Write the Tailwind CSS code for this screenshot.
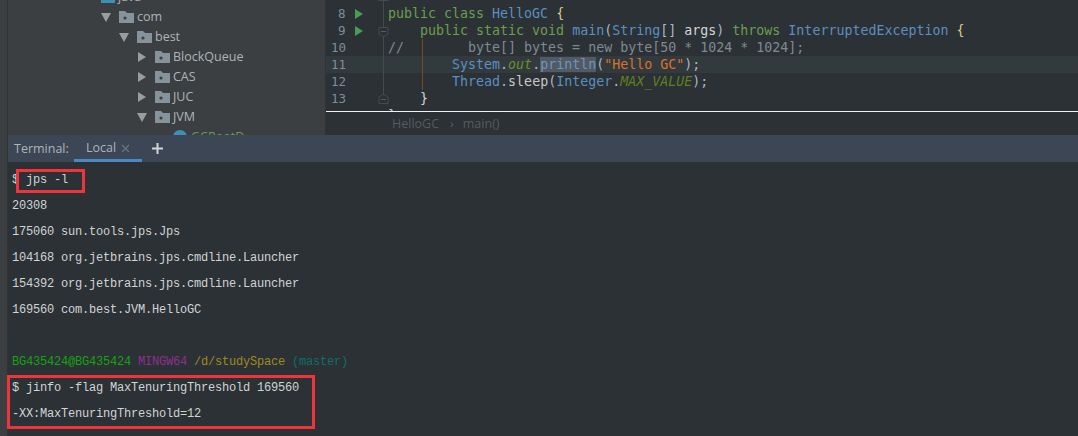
<!DOCTYPE html>
<html lang="en">
<head>
    <meta charset="UTF-8">
    <title>HelloGC - Terminal</title>
    <script src="https://cdn.jsdelivr.net/npm/@tailwindcss/browser@4"></script>
</head>
<body class="bg-[#2b3135] overflow-hidden">
<div class="relative w-[1078px] h-[436px] flex overflow-hidden">
    <!-- Left tool strip -->
    <div class="w-[8px] shrink-0 bg-[#3c3f41] border-r border-[#323232]"></div>

    <div class="flex-1 flex flex-col min-w-0">
        <div class="h-[135px] flex overflow-hidden shrink-0">
            <!-- Project tree -->
            <div class="w-[318px] shrink-0 bg-[#3c3f41] overflow-hidden border-r border-[#323232] font-['Open_Sans',sans-serif] text-[12.5px] text-[#adb4b8]">
                <div class="h-[20px] -mt-[13px] flex items-center pl-[93px] gap-[3px]">
                    <span class="w-[14px] h-[11px] bg-[#3d8fb5]"></span><span>java</span>
                </div>
                <div class="h-[20px] flex items-center pl-[93px]">
                    <svg width="10" height="9" viewBox="0 0 10 9" class="mr-[8px]"><path d="M0 0H10L5 9Z" fill="#9a9d9f"/></svg>
                    <svg width="15" height="12" viewBox="0 0 15 12" class="mr-[3px]"><path d="M0 0H6L8 2H15V12H0Z" fill="#87939a"/><circle cx="6" cy="7" r="1.6" fill="#3c3f41"/></svg>
                    <span>com</span>
                </div>
                <div class="h-[20px] flex items-center pl-[111px]">
                    <svg width="10" height="9" viewBox="0 0 10 9" class="mr-[8px]"><path d="M0 0H10L5 9Z" fill="#9a9d9f"/></svg>
                    <svg width="15" height="12" viewBox="0 0 15 12" class="mr-[3px]"><path d="M0 0H6L8 2H15V12H0Z" fill="#87939a"/><circle cx="6" cy="7" r="1.6" fill="#3c3f41"/></svg>
                    <span>best</span>
                </div>
                <div class="h-[20px] flex items-center pl-[129px]">
                    <svg width="10" height="10" viewBox="0 0 10 10" class="mr-[8px]"><path d="M1 0V10L9 5Z" fill="#9a9d9f"/></svg>
                    <svg width="15" height="12" viewBox="0 0 15 12" class="mr-[3px]"><path d="M0 0H6L8 2H15V12H0Z" fill="#87939a"/><circle cx="6" cy="7" r="1.6" fill="#3c3f41"/></svg>
                    <span>BlockQueue</span>
                </div>
                <div class="h-[20px] flex items-center pl-[129px]">
                    <svg width="10" height="10" viewBox="0 0 10 10" class="mr-[8px]"><path d="M1 0V10L9 5Z" fill="#9a9d9f"/></svg>
                    <svg width="15" height="12" viewBox="0 0 15 12" class="mr-[3px]"><path d="M0 0H6L8 2H15V12H0Z" fill="#87939a"/><circle cx="6" cy="7" r="1.6" fill="#3c3f41"/></svg>
                    <span>CAS</span>
                </div>
                <div class="h-[20px] flex items-center pl-[129px]">
                    <svg width="10" height="10" viewBox="0 0 10 10" class="mr-[8px]"><path d="M1 0V10L9 5Z" fill="#9a9d9f"/></svg>
                    <svg width="15" height="12" viewBox="0 0 15 12" class="mr-[3px]"><path d="M0 0H6L8 2H15V12H0Z" fill="#87939a"/><circle cx="6" cy="7" r="1.6" fill="#3c3f41"/></svg>
                    <span>JUC</span>
                </div>
                <div class="h-[20px] flex items-center pl-[129px]">
                    <svg width="10" height="9" viewBox="0 0 10 9" class="mr-[8px]"><path d="M0 0H10L5 9Z" fill="#9a9d9f"/></svg>
                    <svg width="15" height="12" viewBox="0 0 15 12" class="mr-[3px]"><path d="M0 0H6L8 2H15V12H0Z" fill="#87939a"/><circle cx="6" cy="7" r="1.6" fill="#3c3f41"/></svg>
                    <span>JVM</span>
                </div>
                <div class="h-[20px] flex items-center pl-[165px] gap-[4px] text-[#6a9955]">
                    <span class="w-[14px] h-[14px] rounded-full bg-[#3d8fb5]"></span><span>GCRootD</span>
                </div>
            </div>

            <!-- Editor -->
            <div class="relative flex-1 min-w-0 flex flex-col bg-[#2b3135] font-['DejaVu_Sans_Mono',monospace] text-[13.3px] leading-[17px]">
                <div class="h-[111px] overflow-hidden pt-[5px] shrink-0">
                    <div class="flex h-[17px]">
                        <span class="w-[29px] pl-[12px] text-[#7d8f9a] text-[12.5px]">8</span>
                        <span class="w-[33px] flex items-center"><svg width="8" height="10" viewBox="0 0 8 10"><path d="M0 0V10L8 5Z" fill="#499c54"/></svg></span>
                        <pre class="font-[inherit] text-[#a9b7c6]"><span class="text-[#6a9f4f]">public class </span><span class="text-[#5c8fc0]">HelloGC </span><span class="text-[#d6c98a]">{</span></pre>
                    </div>
                    <div class="flex h-[17px]">
                        <span class="w-[29px] pl-[12px] text-[#7d8f9a] text-[12.5px]">9</span>
                        <span class="w-[33px] flex items-center"><svg width="8" height="10" viewBox="0 0 8 10"><path d="M0 0V10L8 5Z" fill="#499c54"/></svg></span>
                        <pre class="font-[inherit] text-[#a9b7c6]">    <span class="text-[#6a9f4f]">public static void </span><span class="text-[#5c8fc0]">main</span>(<span class="text-[#5c8fc0]">String</span>[] <span class="text-[#d5d5d5]">args</span>) <span class="text-[#6a9f4f]">throws </span><span class="text-[#5c8fc0]">InterruptedException </span><span class="text-[#d6c98a]">{</span></pre>
                    </div>
                    <div class="flex h-[17px]">
                        <span class="w-[29px] pl-[5px] text-[#7d8f9a] text-[12.5px]">10</span>
                        <span class="w-[33px]"></span>
                        <pre class="font-[inherit] text-[#7f8a90]">//        byte[] bytes = new byte[50 * 1024 * 1024];</pre>
                    </div>
                    <div class="flex h-[17px] bg-[#323a3d]">
                        <span class="w-[29px] pl-[5px] text-[#7d8f9a] text-[12.5px]">11</span>
                        <span class="w-[33px]"></span>
                        <pre class="font-[inherit] text-[#a9b7c6]">        <span class="text-[#5c8fc0]">System</span>.<span class="italic text-[#6a8f2f]">out</span>.<span class="bg-[#525a64] text-[#6f94bd]">println</span>(<span class="text-[#d9722c]">"Hello GC"</span>);</pre>
                    </div>
                    <div class="flex h-[17px]">
                        <span class="w-[29px] pl-[5px] text-[#7d8f9a] text-[12.5px]">12</span>
                        <span class="w-[33px]"></span>
                        <pre class="font-[inherit] text-[#a9b7c6]">        <span class="text-[#5c8fc0]">Thread</span>.<span class="text-[#c8c8c8]">sleep</span>(<span class="text-[#5c8fc0]">Integer</span>.<span class="italic text-[#5f7f1f]">MAX_VALUE</span>);</pre>
                    </div>
                    <div class="flex h-[17px]">
                        <span class="w-[29px] pl-[5px] text-[#7d8f9a] text-[12.5px]">13</span>
                        <span class="w-[33px]"></span>
                        <pre class="font-[inherit] text-[#d5d5d5]">    }</pre>
                    </div>
                    <div class="flex h-[17px]">
                        <span class="w-[62px]"></span>
                        <pre class="font-[inherit] text-[#d5d5d5]">}</pre>
                    </div>
                </div>
                <div class="h-[24px] border-t border-[#f0f0f0] flex items-center pl-[66px] font-['Open_Sans',sans-serif] text-[12.5px] text-[#555b5f]">
                    <span class="mr-[11px]">HelloGC</span><span class="mr-[9px]">›</span><span>main()</span>
                </div>
                <!-- Fold gutter and indent guide -->
                <svg class="absolute left-0 top-0" width="110" height="111" viewBox="0 0 110 111" fill="none">
                    <path d="M57.5 0V28M57.5 36V95M52.5 0.5H62.5" stroke="#444b4f"/>
                    <path d="M53 27.5H62V34L57.5 37L53 34Z" stroke="#444b4f"/>
                    <path d="M55 31.5H60" stroke="#555c60"/>
                    <path d="M53 103.5H62V97L57.5 94L53 97Z" stroke="#444b4f"/>
                    <path d="M55 99.5H60" stroke="#555c60"/>
                    <path d="M96.5 39V90" stroke="#7a4a1c"/>
                </svg>
            </div>
        </div>

        <!-- Terminal tabs -->
        <div class="h-[27px] shrink-0 bg-[#3c4654] flex items-stretch font-['Open_Sans',sans-serif] text-[12.5px] text-[#adb4b8]">
            <span class="flex items-center pl-[6px] pt-[2px] w-[66px]">Terminal:</span>
            <div class="w-[68px] border-b-[3px] border-[#4a88c7] flex items-center pl-[12px] pt-[3px] gap-[5px]">
                <span>Local</span>
                <svg width="9" height="9" viewBox="0 0 9 9"><path d="M1 1L8 8M8 1L1 8" stroke="#6b7480" stroke-width="1.2"/></svg>
            </div>
            <span class="flex items-center ml-[10px]">
                <svg width="11" height="11" viewBox="0 0 11 11"><path d="M5.5 0V11M0 5.5H11" stroke="#d0d4d8" stroke-width="2"/></svg>
            </span>
        </div>

        <!-- Terminal output -->
        <div class="flex-1 bg-[#2b3135] font-['Liberation_Mono',monospace] text-[12px] tracking-[-0.2px] leading-[26px] text-[#d0d4d4] pl-[4px] pt-[5px]">
            <div class="h-[26px]">$ jps -l</div>
            <div class="h-[26px]">20308</div>
            <div class="h-[26px]">175060 sun.tools.jps.Jps</div>
            <div class="h-[26px]">104168 org.jetbrains.jps.cmdline.Launcher</div>
            <div class="h-[26px]">154392 org.jetbrains.jps.cmdline.Launcher</div>
            <div class="h-[26px]">169560 com.best.JVM.HelloGC</div>
            <div class="h-[26px]"></div>
            <div class="h-[26px]"><span class="text-[#17a30f]">BG435424@BG435424</span> <span class="text-[#8e2f91]">MINGW64</span> <span class="text-[#a08a1e]">/d/studySpace</span> <span class="text-[#0f6f6a]">(master)</span></div>
            <div class="h-[26px]">$ jinfo -flag MaxTenuringThreshold 169560</div>
            <div class="h-[26px]">-XX:MaxTenuringThreshold=12</div>
        </div>
    </div>

    <!-- Red annotation boxes -->
    <div class="absolute left-[16px] top-[169px] w-[69px] h-[24px] border-[3px] border-[#f0353a]"></div>
    <div class="absolute left-[7px] top-[375px] w-[308px] h-[54px] border-[3px] border-[#f0353a]"></div>
</div>
</body>
</html>
